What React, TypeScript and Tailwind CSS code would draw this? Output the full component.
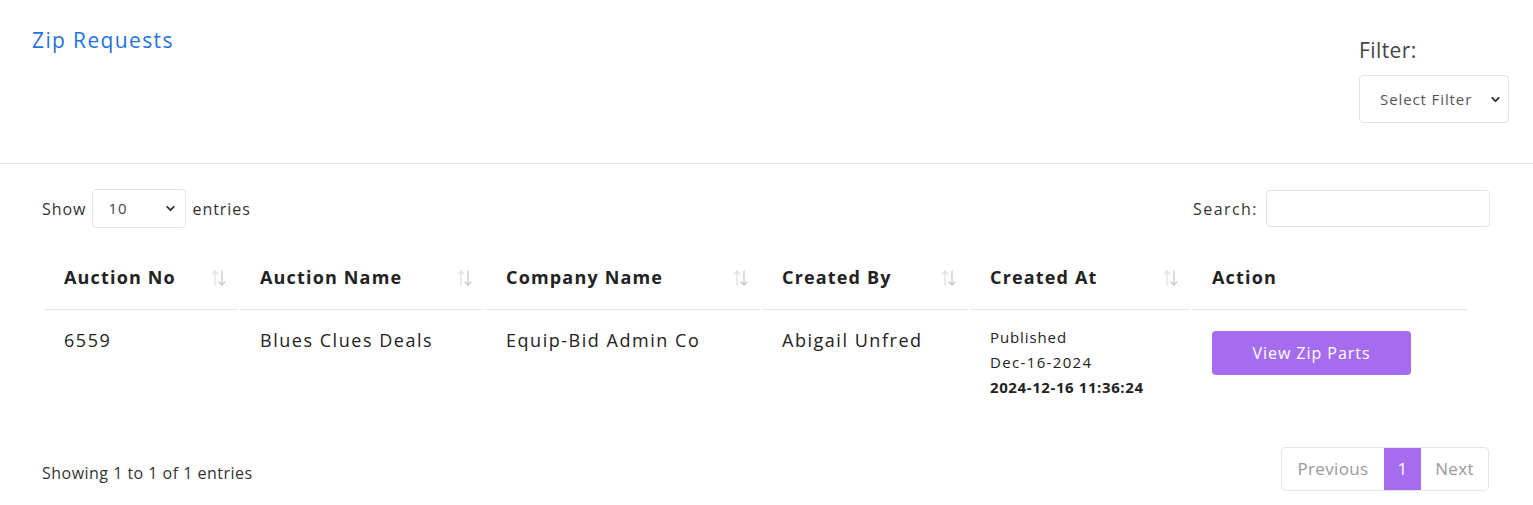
import { ChevronDown } from "lucide-react";

const font = "font-['Open_Sans',sans-serif]";

function SortIcon() {
  return (
    <svg width="18" height="18" viewBox="0 0 18 18" className="shrink-0">
      <g fill="none" strokeWidth="1.3" strokeLinecap="round">
        <path d="M5 16V2M2 5l3-3 3 3" stroke="#e1e1e1" />
        <path d="M12 2v14M9 13l3 3 3-3" stroke="#c9c9c9" />
      </g>
    </svg>
  );
}

const columns = [
  { title: "Auction No", w: "w-[194px]", sort: true },
  { title: "Auction Name", w: "w-[244px]", sort: true },
  { title: "Company Name", w: "w-[274px]", sort: true },
  { title: "Created By", w: "w-[206px]", sort: true },
  { title: "Created At", w: "w-[220px]", sort: true },
  { title: "Action", w: "w-[275px]", sort: false },
];

export default function App() {
  return (
    <div className={`${font} min-h-screen bg-white text-[#222]`}>
      <div className="flex justify-between border-b border-[#e6e6e6] pl-[32px] pr-[24px] h-[164px]">
        <h1 className="pt-[25px] text-[21px] font-medium leading-[30px] tracking-[0.065em] text-[#1f73e0]">
          Zip Requests
        </h1>
        <div className="pt-[34px]">
          <div className="text-[21px] leading-[32px] tracking-[0.02em] text-[#454545]">Filter:</div>
          <div className="mt-[9px] flex h-[48px] w-[150px] items-center justify-between rounded-[4px] border border-[#e4e4e4] pl-[20px] pr-[6px] text-[15px] tracking-[0.06em] text-[#555]">
            <span>Select Filter</span>
            <ChevronDown size={13} strokeWidth={3.5} className="text-[#333]" />
          </div>
        </div>
      </div>

      <div className="pl-[42px] pr-[43px] pt-[25px]">
        <div className="flex items-center justify-between">
          <div className="flex items-center gap-[6px] text-[16px] tracking-[0.06em] text-[#333]">
            <span>Show</span>
            <div className="flex h-[39px] w-[94px] items-center justify-between rounded-[4px] border border-[#e4e4e4] pl-[15px] pr-[8px] text-[15px] text-[#444]">
              <span>10</span>
              <ChevronDown size={13} strokeWidth={3.5} className="text-[#333]" />
            </div>
            <span>entries</span>
          </div>
          <div className="flex items-center gap-[8px] text-[16px] tracking-[0.09em] text-[#333]">
            <span>Search:</span>
            <div className="h-[37px] w-[224px] rounded-[4px] border border-[#e4e4e4]" />
          </div>
        </div>

        <table className="mt-[18px] w-[1427px] table-fixed border-separate border-spacing-x-[2px] border-spacing-y-0">
          <thead>
            <tr>
              {columns.map((c) => (
                <th
                  key={c.title}
                  className={`${c.w} h-[64px] border-b border-[#e6e6e6] pl-[20px] pr-[10px] text-left align-middle`}
                >
                  <div className="flex items-center justify-between">
                    <span className="text-[18px] font-bold tracking-[0.065em] text-[#222]">{c.title}</span>
                    {c.sort && <SortIcon />}
                  </div>
                </th>
              ))}
            </tr>
          </thead>
          <tbody>
            <tr className="align-top text-[18px] tracking-[0.085em] text-[#222]">
              <td className="pl-[20px] pt-[16px] leading-[28px]">6559</td>
              <td className="pl-[20px] pt-[16px] leading-[28px]">Blues Clues Deals</td>
              <td className="pl-[20px] pt-[16px] leading-[28px]">Equip-Bid Admin Co</td>
              <td className="pl-[20px] pt-[16px] leading-[28px]">Abigail Unfred</td>
              <td className="pl-[20px] pt-[15px] pb-[14px] text-[15px] leading-[25px] tracking-[0.06em]">
                <div>Published</div>
                <div className="tracking-[0.09em]">Dec-16-2024</div>
                <div className="font-bold tracking-[0.04em]">2024-12-16 11:36:24</div>
              </td>
              <td className="pl-[20px] pt-[21px]">
                <button className="h-[44px] w-[199px] rounded-[4px] bg-[#a66cf0] text-[16px] font-medium tracking-[0.06em] text-white">
                  View Zip Parts
                </button>
              </td>
            </tr>
          </tbody>
        </table>

        <div className="mt-[33px] flex items-start justify-between">
          <div className="pt-[14px] text-[16px] leading-[24px] tracking-[0.03em] text-[#333]">
            Showing 1 to 1 of 1 entries
          </div>
          <div className="mr-[1px] flex h-[44px] overflow-hidden rounded-[4px] border border-[#e6e6e6] text-[17px] tracking-[0.02em] text-[#999]">
            <span className="flex w-[102px] items-center justify-center">Previous</span>
            <span className="flex w-[37px] items-center justify-center bg-[#a66cf0] text-white">1</span>
            <span className="flex w-[67px] items-center justify-center">Next</span>
          </div>
        </div>
      </div>
    </div>
  );
}
